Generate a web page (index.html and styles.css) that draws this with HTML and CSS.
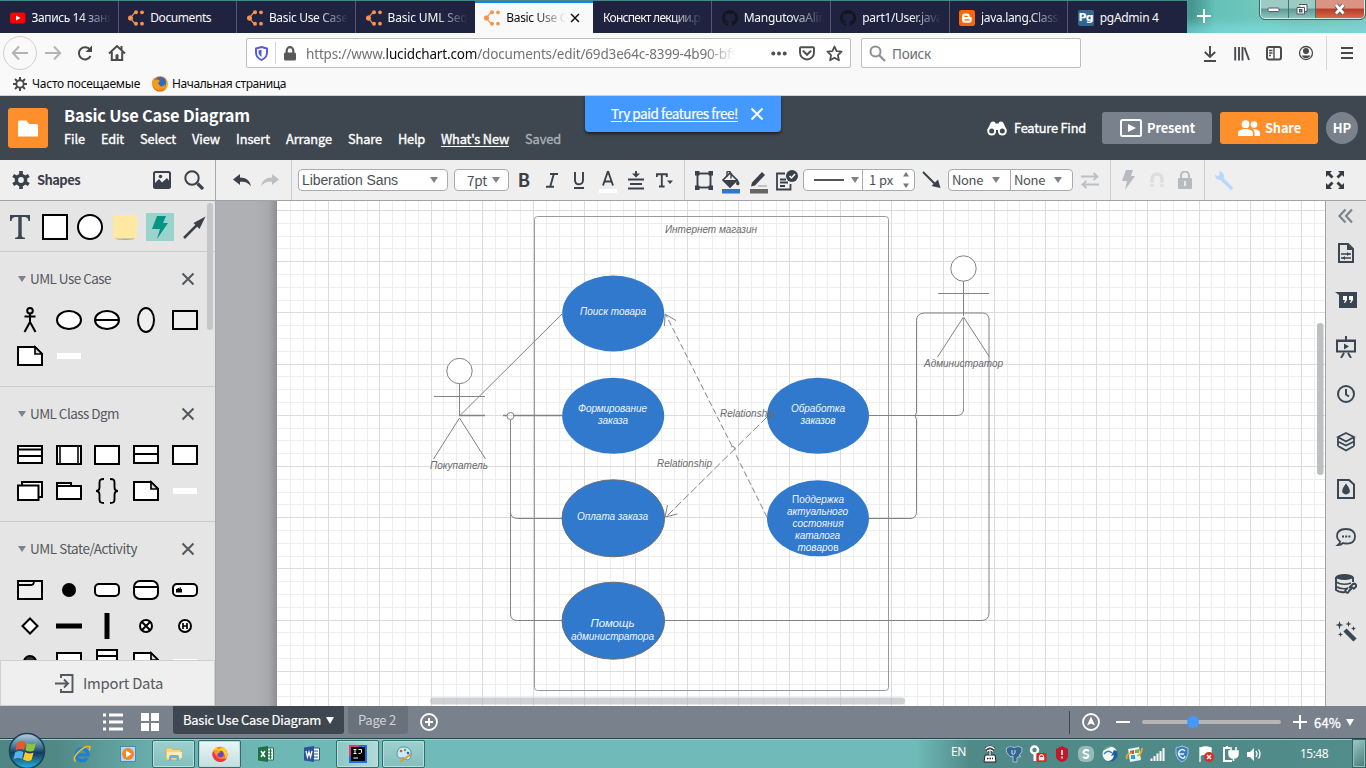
FILE: index.html
```html
<!DOCTYPE html>
<html lang="en">
<head>
<meta charset="utf-8">
<title>Basic Use Case Diagram: Lucidchart</title>
<link rel="stylesheet" href="styles.css">
</head>
<body>
<svg class="defs" width="0" height="0">
  <defs>
    <symbol id="lucid" viewBox="0 0 16 16"><g fill="#f7934e"><path d="M7.600 2.600 4.500 6.200a2.400 2.400 0 1 0 0 3.600l3.100 3.600-1.200.6L3 9.800V6.200L6.400 2z"/><circle cx="2.500" cy="8" r="2.500"/><circle cx="8" cy="2.300" r="2"/><circle cx="8" cy="13.700" r="2"/><circle cx="14" cy="2.300" r="1.900"/><circle cx="14" cy="13.700" r="1.900"/></g></symbol>
    <symbol id="github" viewBox="0 0 16 16"><path fill="#14161d" d="M8 0C3.580 0 0 3.580 0 8c0 3.540 2.290 6.530 5.470 7.590.4.070.55-.17.55-.38v-1.490c-2.010.37-2.530-.49-2.690-.94-.09-.23-.48-.94-.82-1.130-.28-.15-.68-.52-.01-.53.63-.01 1.080.58 1.230.82.72 1.210 1.870.87 2.330.66.07-.52.28-.87.51-1.070-1.780-.2-3.640-.89-3.640-3.950 0-.87.31-1.590.82-2.150-.08-.2-.36-1.020.08-2.120 0 0 .67-.21 2.200.82a7.600 7.600 0 0 1 4 0c1.530-1.040 2.200-.82 2.200-.82.44 1.100.16 1.920.08 2.120.51.56.82 1.270.82 2.150 0 3.070-1.870 3.750-3.650 3.950.29.25.54.73.54 1.480v2.200c0 .21.15.46.55.38A8 8 0 0 0 8 0z"/></symbol>
    <symbol id="x" viewBox="0 0 14 14"><path d="M1.500 1.500l11 11M12.500 1.500l-11 11" stroke="currentColor" stroke-width="2" fill="none"/></symbol>
    <symbol id="note" viewBox="0 0 26 26"><path d="M1 4h17l7 7v11H1z" fill="#fff" stroke="#000" stroke-width="2"/><path d="M18 4v7h7z" fill="#ddd" stroke="#000" stroke-width="1.700"/></symbol>
    <symbol id="rect" viewBox="0 0 26 26"><path d="M1 4h24v18H1z" fill="#fff" stroke="#000" stroke-width="2"/></symbol>
    <symbol id="blank" viewBox="0 0 26 26"><path d="M1 10h24v6H1z" fill="#fff"/></symbol>
    <symbol id="ff" viewBox="0 0 20 20"><circle cx="10" cy="10.500" r="8.500" fill="#ff7a1a"/><path d="M3 5l3-3 2 3 5-3c6 3 7 12 1 16 3-4 2-8-1-9z" fill="#ffcb2e"/><path d="M2 7c-2 6 3 12 8 12 4 0 7-2 8-5-3 3-12 3-14-5z" fill="#f0305a"/><circle cx="10.500" cy="10" r="3.600" fill="#6b3fd0"/><path d="M4 6c3-1 5 0 7 2-3 0-3 1-4 3-2 0-4-2-3-5z" fill="#ff9a1f"/></symbol>
    <linearGradient id="orb" x1="0" y1="0" x2="0" y2="1"><stop offset="0" stop-color="#b7d3df"/><stop offset=".4" stop-color="#3f7192"/><stop offset=".55" stop-color="#123a5e"/><stop offset="1" stop-color="#29b4dc"/></linearGradient>
  </defs>
</svg>

<div class="tabs">
  <div class="tab"><svg class="fav" viewBox="0 0 16 16"><rect y="2.500" width="15.500" height="11" rx="2.500" fill="#f00"/><path d="M6 5.500v5l4.500-2.500z" fill="#fff"/></svg><span class="lbl fade"><span data-w="82">Запись 14 заня</span></span></div>
  <div class="tab"><svg class="fav"><use href="#lucid"/></svg><span class="lbl"><span data-w="61">Documents</span></span></div>
  <div class="tab"><svg class="fav"><use href="#lucid"/></svg><span class="lbl fade"><span data-w="79">Basic Use Case</span></span></div>
  <div class="tab"><svg class="fav"><use href="#lucid"/></svg><span class="lbl fade"><span data-w="80">Basic UML Seq</span></span></div>
  <div class="tab active"><svg class="fav"><use href="#lucid"/></svg><span class="lbl fade short"><span data-w="79">Basic Use Case</span></span><svg class="tabx"><use href="#x"/></svg></div>
  <div class="tab first"><span class="lbl fade wide"><span data-w="104">Конспект лекции.pd</span></span></div>
  <div class="tab"><svg class="fav"><use href="#github"/></svg><span class="lbl fade"><span data-w="82">MangutovaAlin</span></span></div>
  <div class="tab"><svg class="fav"><use href="#github"/></svg><span class="lbl fade"><span data-w="80">part1/User.java</span></span></div>
  <div class="tab"><svg class="fav" viewBox="0 0 16 16"><rect width="16" height="16" rx="2.500" fill="#ff6600"/><path d="M5.500 3.500h3a2.200 2.200 0 0 1 2.200 2.300c0 1 .3 1.200 1 1.200.8 0 1 .3 1 1v2a2.700 2.700 0 0 1-2.700 2.700H5.700A2.700 2.700 0 0 1 3 10V6.200a2.600 2.600 0 0 1 2.500-2.700z" fill="#fff"/><path d="M6 6.400h2.200M6 9.900h4" stroke="#ff6600" stroke-width="1.400" stroke-linecap="round"/></svg><span class="lbl fade"><span data-w="77">java.lang.Class</span></span></div>
  <div class="tab"><span class="fav pg">Pg</span><span class="lbl"><span data-w="59">pgAdmin 4</span></span></div>
  <div class="glass">
    <svg class="plus" viewBox="0 0 14 14"><path d="M7 0v14M0 7h14" stroke="#fff" stroke-width="2"/></svg>
    <div class="winbtns">
      <span class="wb"><svg width="14" height="8"><rect x="1" y="3" width="11" height="3.500" rx="1" fill="#fff" stroke="#555b66"/></svg></span><span class="wb"><svg width="14" height="13"><path d="M4 1.500h8v7h-2M2 4.500h7.500v6.500H2z" fill="#fff" stroke="#4c5660"/><rect x="4.500" y="6.500" width="2.500" height="2.500" fill="#5d8b87" stroke="#4c5660"/></svg></span><span class="wb close"><svg width="14" height="13" viewBox="0 0 14 13"><path d="M3 2l7.500 8.500M10.500 2L3 10.500" stroke="#555" stroke-width="4.500"/><path d="M3 2l7.500 8.500M10.500 2L3 10.500" stroke="#fff" stroke-width="2.800"/></svg></span>
    </div>
  </div>
</div>

<div class="nav">
  <span class="back"><svg width="18" height="16" viewBox="0 0 18 16"><path d="M17 8H2M8 1.500L1.800 8 8 14.500" fill="none" stroke="#b4b4b5" stroke-width="2"/></svg></span>
  <svg class="n-fwd" width="18" height="16" viewBox="0 0 18 16"><path d="M1 8h15M10 1.500L16.200 8 10 14.500" fill="none" stroke="#b4b4b5" stroke-width="2"/></svg>
  <svg class="n-reload" width="16" height="16" viewBox="0 0 16 16"><path d="M13 4.700A6.100 6.100 0 1 0 13.500 11" fill="none" stroke="#4a4a4c" stroke-width="2"/><path d="M15 .500v6.500H8.500z" fill="#4a4a4c"/></svg>
  <svg class="n-home" width="18" height="18" viewBox="0 0 18 18"><path d="M1 9.500L9 2l8 7.500M3.800 8v8h10.400V8M13.500 2v4" fill="none" stroke="#4a4a4c" stroke-width="2"/><path d="M7.500 16v-4.500a1.500 1.500 0 0 1 3 0V16z" fill="#4a4a4c"/></svg>
  <div class="url">
    <svg class="u-shield" width="13" height="15" viewBox="0 0 13 15"><path d="M6.500 1L12 2.500v4c0 3.500-2 6-5.500 7.500C3 12.500 1 10 1 6.500v-4z" fill="none" stroke="#5a52e0" stroke-width="1.900"/><path d="M6.500 3.800v7c-1.800-1-3-2.800-3-4.800V4.500z" fill="#3f63d8"/></svg>
    <i class="u-div"></i>
    <svg class="u-lock" width="12" height="15" viewBox="0 0 12 15"><rect y="6.500" width="12" height="8" rx="1.500" fill="#59595b"/><path d="M2.700 7V4.500a3.300 3.300 0 0 1 6.600 0V7" fill="none" stroke="#59595b" stroke-width="2.200"/></svg>
    <span class="u-text"><span data-w="433">https://www.<b>lucidchart.com</b>/documents/edit/69d3e64c-8399-4b90-bf9</span></span>
    <svg class="u-dots" width="16" height="5"><g fill="#4f4f51"><circle cx="2.300" cy="2.500" r="2"/><circle cx="8" cy="2.500" r="2"/><circle cx="13.700" cy="2.500" r="2"/></g></svg>
    <svg class="u-pocket" width="16" height="15" viewBox="0 0 16 15"><path d="M2 1.200h12a1 1 0 0 1 1 1V6.500a7 7 0 0 1-14 0V2.200a1 1 0 0 1 1-1z" fill="none" stroke="#4f4f51" stroke-width="1.900"/><path d="M4.500 5.300L8 8.700l3.500-3.400" fill="none" stroke="#4f4f51" stroke-width="2.100" stroke-linecap="round"/></svg>
    <svg class="u-star" width="17" height="17" viewBox="0 0 17 17"><path d="M8.500 1.500l2.100 4.700 5 .5-3.700 3.500 1 5.100-4.400-2.600-4.400 2.600 1-5.100L1.400 6.700l5-.5z" fill="none" stroke="#4f4f51" stroke-width="1.800" stroke-linejoin="round"/></svg>
  </div>
  <div class="search"><svg width="17" height="17" viewBox="0 0 17 17"><circle cx="6.500" cy="6.500" r="5" fill="none" stroke="#8e8e90" stroke-width="2"/><path d="M10 10l6 6" stroke="#8e8e90" stroke-width="2.200"/></svg><span data-w="39">Поиск</span></div>
  <div class="navr">
    <svg width="14" height="17" viewBox="0 0 14 17"><path d="M7 1v11M1.800 7L7 12l5.200-5M1 16h12" fill="none" stroke="#4a4a4c" stroke-width="1.900"/></svg>
    <svg width="16" height="15" viewBox="0 0 16 15"><path d="M1.200 1v13.500M5 1v13.500M8.500 1v13.500M10.500 1.500l4.500 12.500" fill="none" stroke="#4a4a4c" stroke-width="1.900"/></svg>
    <svg width="16" height="15" viewBox="0 0 16 15"><rect x="1" y="1" width="14" height="12.500" rx="2" fill="none" stroke="#4a4a4c" stroke-width="2"/><path d="M8 1v13M3 4.500h3.500M3 7h3.500M3 9.500h2" stroke="#4a4a4c" stroke-width="1.400"/></svg>
    <svg width="16" height="16" viewBox="0 0 16 16"><circle cx="8" cy="8" r="6.500" fill="none" stroke="#4a4a4c" stroke-width="1.300"/><circle cx="8" cy="6" r="3" fill="#4a4a4c"/><path d="M3.500 10.500h9a5.200 5.200 0 0 1-9 0z" fill="#4a4a4c"/></svg>
    <i class="n-div"></i>
    <svg width="12" height="12" viewBox="0 0 12 12"><path d="M0 1h12M0 6h12M0 11h12" stroke="#4a4a4c" stroke-width="2"/></svg>
  </div>
</div>

<div class="bookmarks">
  <svg width="14" height="14" viewBox="0 0 14 14"><g stroke="#4a4a4c" stroke-width="2"><path d="M7 0v14M0 7h14M2 2l10 10M12 2L2 12"/></g><circle cx="7" cy="7" r="3.700" fill="#f9f9fa" stroke="#4a4a4c" stroke-width="1.900"/></svg>
  <span class="bm1" data-w="108">Часто посещаемые</span>
  <svg class="bm-ff" width="16" height="16" viewBox="0 0 16 16"><circle cx="8" cy="8" r="7.800" fill="#e66a14"/><circle cx="8.500" cy="6.500" r="5.500" fill="#2d6cc0"/><path d="M0 5l2-3 1 2c2-1 4 0 5 1L6 7l2 3c2 1 4 0 5-2 1 4-3 7-7 6S0 9 0 5z" fill="#f59a1c"/><path d="M14 3c3 4 2 9-3 12 3-3 4-7 3-12z" fill="#f7c52a"/></svg>
  <span class="bm2" data-w="114">Начальная страница</span>
</div>

<header class="head">
  <div class="logo"><svg width="20" height="17" viewBox="0 0 20 17"><path d="M0 2.200A1.500 1.500 0 0 1 1.500.500h7L11 4h7.500A1.500 1.500 0 0 1 20 5.500v11H0z" fill="#fff"/></svg></div>
  <div class="titles">
    <div class="title"><span data-w="186">Basic Use Case Diagram</span></div>
    <div class="menu"><span data-w="21">File</span><span data-w="23">Edit</span><span data-w="36">Select</span><span data-w="28">View</span><span data-w="34">Insert</span><span data-w="46">Arrange</span><span data-w="34">Share</span><span data-w="27">Help</span><span data-w="68" class="new">What's New</span><span data-w="36" class="saved">Saved</span></div>
  </div>
  <div class="banner"><a data-w="127">Try paid features free!</a><svg width="14" height="14"><use href="#x"/></svg></div>
  <div class="find"><svg width="20" height="15" viewBox="0 0 20 15"><path d="M3.500 2Q4 .500 6 .500q2.500 0 2.500 2h3q0-2 2.500-2 2 0 2.500 1.500l3 7h-19z" fill="#fff"/><circle cx="4.700" cy="10" r="4.500" fill="#fff"/><circle cx="15.300" cy="10" r="4.500" fill="#fff"/><circle cx="4.700" cy="10" r="2.500" fill="#3e4650"/><circle cx="15.300" cy="10" r="2.500" fill="#3e4650"/><path d="M10 9v6" stroke="#3e4650" stroke-width="2"/></svg><span data-w="72">Feature Find</span></div>
  <div class="btn present"><svg width="22" height="18" viewBox="0 0 22 18"><rect x="1" y="1" width="20" height="16" rx="1.500" fill="none" stroke="#fff" stroke-width="2"/><path d="M8 5v8l8-4z" fill="#fff"/></svg><span data-w="48">Present</span></div>
  <div class="btn share"><svg width="22" height="17" viewBox="0 0 22 17"><g fill="#fff"><circle cx="7.500" cy="4.200" r="3.900"/><circle cx="16" cy="4.500" r="3.300"/><path d="M0 16v-2.500c0-3 3-4.500 7.500-4.500S15 10.500 15 13.500V16zM16.500 16v-2.500c0-2-.7-3.300-2-4.300 4.500-.4 7.500 1.300 7.500 4V16z"/></g></svg><span data-w="36">Share</span></div>
  <div class="avatar">HP</div>
</header>

<div class="mid">
  <aside class="left">
    <div class="lhead"><svg width="18" height="18" viewBox="0 0 18 18"><g stroke="#3a414a" stroke-width="3.600"><path d="M9 0v18M1.200 4.500l15.600 9M1.200 13.500l15.600-9"/></g><circle cx="9" cy="9" r="4.600" fill="#efefef" stroke="#3a414a" stroke-width="3.400"/></svg><span class="lt" data-w="43">Shapes</span>
      <svg class="pic" width="18" height="18" viewBox="0 0 18 18"><rect x="1" y="1" width="16" height="16" rx="1.500" fill="none" stroke="#3a414a" stroke-width="2"/><circle cx="7.500" cy="5.500" r="1.800" fill="#3a414a"/><path d="M2 16v-4l4-4 3 3.500L14 7l3 4v5z" fill="#3a414a"/></svg>
      <svg width="20" height="20" viewBox="0 0 20 20"><circle cx="8" cy="8" r="6.700" fill="none" stroke="#3a414a" stroke-width="2"/><path d="M13.500 13.500l5.500 5.500" stroke="#3a414a" stroke-width="3.200"/></svg></div>
    <div class="lbody">
      <div class="basic">
        <svg width="20" height="26" viewBox="0 0 20 26"><path d="M0 1h20v6h-1.500C18 4 17 3 14.500 3h-2.800v18c0 2 1 2.500 3.300 2.700V25H5v-1.300c2.300-.2 3.300-.7 3.300-2.700V3H5.500C3 3 2 4 1.500 7H0z" fill="#3a4652"/></svg>
        <svg class="b2" width="26" height="26"><rect x="1" y="1" width="24" height="24" fill="#fff" stroke="#000" stroke-width="2"/></svg>
        <svg class="b3" width="26" height="26"><circle cx="13" cy="13" r="12" fill="#fff" stroke="#000" stroke-width="2"/></svg>
        <svg class="b4" width="24" height="26"><ellipse cx="12" cy="24.300" rx="10" ry="1.700" fill="#aaa"/><path d="M0 1h24v23.500H0z" fill="#ffe8a1"/></svg>
        <svg class="b5" width="28" height="28"><path d="M0 0h28v28H0z" fill="#99d3cb"/><path d="M11 3h9l-3 7h5L11 26l3-10H6z" fill="#059484"/></svg>
        <svg class="b6" width="24" height="25"><path d="M1 23L16 8" stroke="#3a414a" stroke-width="2.500"/><path d="M22.500 1.500L10.500 8l6 6z" fill="#3a414a"/></svg>
      </div>
      <section class="sec"><h3><i></i><span data-w="81">UML Use Case</span><svg class="sx"><use href="#x"/></svg></h3>
        <div class="shapes">
          <svg viewBox="0 0 26 26"><g fill="none" stroke="#000" stroke-width="2"><circle cx="13" cy="3.800" r="2.800"/><path d="M13 7v9M7.500 9.500h11M13 15l-5.500 10M13 15l5.500 10"/></g></svg>
          <svg viewBox="0 0 26 26"><ellipse cx="13" cy="13" rx="12" ry="9" fill="#fff" stroke="#000" stroke-width="2"/></svg>
          <svg viewBox="0 0 26 26"><ellipse cx="13" cy="13" rx="12" ry="9" fill="#fff" stroke="#000" stroke-width="2"/><path d="M1 13h24" stroke="#000" stroke-width="2"/></svg>
          <svg viewBox="0 0 26 26"><ellipse cx="13" cy="13" rx="8" ry="12" fill="#eee" stroke="#000" stroke-width="2"/></svg>
          <svg viewBox="0 0 26 26"><path d="M1 4h24v18H1z" fill="#eee" stroke="#000" stroke-width="2"/></svg>
          <svg><use href="#note"/></svg><svg><use href="#blank"/></svg>
        </div></section>
      <section class="sec"><h3><i></i><span data-w="89">UML Class Dgm</span><svg class="sx"><use href="#x"/></svg></h3>
        <div class="shapes">
          <svg viewBox="0 0 26 26"><path d="M1 4h24v17H1zM1 7.500h24M1 14h24" fill="#fff" stroke="#000" stroke-width="2"/></svg>
          <svg viewBox="0 0 26 26"><path d="M1 4h24v18H1z" fill="#fff" stroke="#000" stroke-width="2"/><path d="M4 4v18M22 4v18" stroke="#222" stroke-width="1.800"/></svg>
          <svg><use href="#rect"/></svg>
          <svg viewBox="0 0 26 26"><path d="M1 4h24v17H1zM1 12h24" fill="#fff" stroke="#000" stroke-width="2"/></svg>
          <svg><use href="#rect"/></svg>
          <svg viewBox="0 0 26 26"><path d="M5 4h20v15H5z" fill="#fff" stroke="#000" stroke-width="2"/><path d="M1 7.500h20.500V22H1z" fill="#fff" stroke="#000" stroke-width="2"/></svg>
          <svg viewBox="0 0 26 26"><path d="M1 8V5h14v3M1 8h24v13H1z" fill="#fff" stroke="#000" stroke-width="2"/></svg>
          <svg viewBox="0 0 26 26"><path d="M10 1C6 1 5.500 2 5.500 5v4c0 3-1 4-3.500 4 2.500 0 3.500 1 3.500 4v4c0 3 .5 4 4.500 4M16 1c4 0 4.500 1 4.500 4v4c0 3 1 4 3.500 4-2.500 0-3.500 1-3.500 4v4c0 3-.5 4-4.500 4" fill="none" stroke="#000" stroke-width="1.900"/></svg>
          <svg><use href="#note"/></svg><svg><use href="#blank"/></svg>
        </div></section>
      <section class="sec last"><h3><i></i><span data-w="107">UML State/Activity</span><svg class="sx"><use href="#x"/></svg></h3>
        <div class="shapes">
          <svg viewBox="0 0 26 26"><path d="M1 4h24v18H1z" fill="#eee" stroke="#000" stroke-width="2"/><path d="M1 8h13q3 0 3-4" fill="none" stroke="#000" stroke-width="1.800"/></svg>
          <svg viewBox="0 0 26 26"><circle cx="13" cy="13" r="7"/></svg>
          <svg viewBox="0 0 26 26"><rect x="1" y="7" width="24" height="12" rx="4" fill="#fff" stroke="#000" stroke-width="2"/></svg>
          <svg viewBox="0 0 26 26"><rect x="1" y="4" width="24" height="18" rx="6" fill="#fff" stroke="#000" stroke-width="2"/><path d="M1 10h24" stroke="#000" stroke-width="2"/></svg>
          <svg viewBox="0 0 26 26"><rect x="1" y="7" width="24" height="12" rx="4" fill="#fff" stroke="#000" stroke-width="2"/><path d="M4 12h1.500v-1h1.500v1h.5v-1.500h1.500V12h1v3.500H4z"/></svg>
          <svg viewBox="0 0 26 26"><path d="M13 5.500l7.500 7.500-7.500 7.500L5.500 13z" fill="#fff" stroke="#000" stroke-width="2"/></svg>
          <svg viewBox="0 0 26 26"><path d="M0 10.500h26v5H0z"/></svg>
          <svg viewBox="0 0 26 26"><path d="M10.500 0h5v26h-5z"/></svg>
          <svg viewBox="0 0 26 26"><circle cx="13" cy="13" r="6" fill="#fff" stroke="#000" stroke-width="2"/><path d="M9 9l8 8M17 9l-8 8" stroke="#000" stroke-width="2"/></svg>
          <svg viewBox="0 0 26 26"><circle cx="13" cy="13" r="6" fill="#fff" stroke="#000" stroke-width="2"/><path d="M11 10v6M15 10v6M11 13h4" stroke="#000" stroke-width="1.700"/></svg>
          <svg viewBox="0 0 26 26"><circle cx="13" cy="13" r="6" fill="#333" stroke="#000" stroke-width="2"/></svg>
          <svg><use href="#rect"/></svg>
          <svg viewBox="0 0 26 26"><path d="M3 1h20v24H3zM3 7h20" fill="#fff" stroke="#000" stroke-width="2"/></svg>
          <svg><use href="#note"/></svg><svg><use href="#blank"/></svg>
        </div></section>
      <i class="lscroll"></i>
    </div>
    <div class="import"><svg width="19" height="19" viewBox="0 0 19 19"><path d="M6 4V1h11.500v17H6v-3M0 9.500h12M9 5.500l4 4-4 4" fill="none" stroke="#55585c" stroke-width="1.900"/></svg><span data-w="80">Import Data</span></div>
  </aside>

  <div class="work">
    <div class="tools">
      <svg class="t1" width="18" height="13" viewBox="0 0 18 13"><path d="M0 5.500L7 0v3.500c6 0 10 3 11 9-3-4-6-5-11-4.700V11z" fill="#3a414a"/></svg>
      <svg class="t2" width="18" height="13" viewBox="0 0 18 13"><path d="M18 5.500L11 0v3.500C5 3.500 1 6.500 0 12.500 3 8.500 6 7.500 11 7.800V11z" fill="#bcbfc3"/></svg>
      <i class="sep"></i>
      <div class="sel font"><span data-w="96">Liberation Sans</span><i class="tri"></i></div><b></b>
      <div class="sel size"><span data-w="20">7pt</span><i class="tri"></i></div>
      <strong class="tb">B</strong>
      <svg width="12" height="15" viewBox="0 0 12 15"><path d="M4 1h8M0 13.700h8M7.800 1L4.200 13.700" fill="none" stroke="#3a414a" stroke-width="1.900"/></svg>
      <svg width="12" height="17" viewBox="0 0 12 17"><path d="M2 0v8q0 4.300 4 4.300T10 8V0" fill="none" stroke="#3a414a" stroke-width="1.900"/><path d="M1 16h10" stroke="#3a414a" stroke-width="2"/></svg>
      <svg class="low" width="18" height="22" viewBox="0 0 18 22"><path d="M4 14.500L8.700 1h.6L14 14.500M5.500 10.500h7" fill="none" stroke="#3a414a" stroke-width="1.900"/><path d="M0 18h18v4H0z" fill="#fff"/></svg>
      <svg width="16" height="19" viewBox="0 0 16 19"><path d="M8 0v5M0 8.500h16M2 13h12M0 17.500h16" stroke="#3a414a" stroke-width="1.900"/><path d="M4 2.500h8L8 6.500z" fill="#3a414a"/></svg>
      <svg width="17" height="15" viewBox="0 0 17 15"><path d="M.8 4V1.200h10V4M5.800 1v12M3 13.500h5.600" fill="none" stroke="#3a414a" stroke-width="1.900"/><path d="M11 7.500h6l-3 3.500z" fill="#3a414a"/></svg>
      <i class="sep"></i>
      <svg width="18" height="19" viewBox="0 0 18 19"><rect x="2.500" y="2.500" width="13" height="14" fill="none" stroke="#3a414a" stroke-width="1.900"/><path d="M0 0h4.500v4.500H0zM13.500 0H18v4.500h-4.500zM0 14.500h4.500V19H0zM13.500 14.500H18V19h-4.500z" fill="#3a414a"/></svg>
      <svg class="low" width="18" height="23" viewBox="0 0 18 23"><path d="M1 9L8 2l7 7-7 7z" fill="#efefef" stroke="#3a414a" stroke-width="1.700"/><path d="M1 9h14l-7 7zM15 8q3.500 4 2 6-2 1-3-1z" fill="#3a414a"/><path d="M5 5.500V1q3-2 4 2v4.500" fill="none" stroke="#3a414a" stroke-width="1.400"/><path d="M0 18h18v4.500H0z" fill="#2f77ce"/></svg>
      <svg class="low" width="18" height="23" viewBox="0 0 18 23"><path d="M1 15.500l1-4L12 1l3 3L5 14.500z" fill="#3a414a"/><path d="M8 15h9" stroke="#aaa" stroke-width="1.300"/><path d="M0 18h18v4.500H0z" fill="#666"/></svg>
      <svg width="22" height="21" viewBox="0 0 22 21"><path d="M9 3.500H1v16h13.500V14M4 9.500h6M4 12.500h8M4 16h5" fill="none" stroke="#3a414a" stroke-width="1.800"/><circle cx="16" cy="6" r="6" fill="#3a414a"/><path d="M13.500 6l2 2 3.500-4" fill="none" stroke="#fff" stroke-width="1.500"/></svg><b></b>
      <div class="sel line"><svg width="30" height="4"><path d="M0 2h30" stroke="#555" stroke-width="2"/></svg><i class="tri"></i><i class="vd"></i><span data-w="24">1 px</span><svg width="6" height="16"><path d="M3 0l3 4.500H0zM3 16l3-4.500H0z" fill="#777"/></svg></div>
      <svg width="19" height="18" viewBox="0 0 19 18"><path d="M1 1l12 12" stroke="#3a414a" stroke-width="1.900"/><path d="M18.500 17L16 8.500 9.500 15z" fill="#3a414a"/></svg>
      <div class="sel ends"><span data-w="31">None</span><i class="tri"></i><i class="vd"></i><span data-w="31">None</span><i class="tri"></i></div>
      <svg width="18" height="17" viewBox="0 0 18 17"><path d="M0 4.500h15M18 12.500H3M12.500 1l4 3.500-4 3.500M5.500 9l-4 3.500 4 3.500" fill="none" stroke="#bcbfc3" stroke-width="1.800"/></svg>
      <i class="sep"></i>
      <svg width="13" height="20" viewBox="0 0 13 20"><path d="M4 0h7L9 6h4L3 20l2-9H0z" fill="#b7babe"/></svg>
      <svg width="14" height="16" viewBox="0 0 14 16"><path d="M2 15V7a5 5 0 0 1 10 0v8" fill="none" stroke="#dcdee0" stroke-width="3.500"/><path d="M0 11.500h14" stroke="#efefef" stroke-width="1.300"/></svg>
      <svg width="14" height="18" viewBox="0 0 14 18"><rect y="7" width="14" height="11" rx="1" fill="#b7babe"/><path d="M3 8V4.500a4 4 0 0 1 8 0V8" fill="none" stroke="#b7babe" stroke-width="2"/><path d="M7 10v5" stroke="#efefef" stroke-width="1.800"/></svg>
      <i class="sep"></i>
      <svg width="18" height="19" viewBox="0 0 18 19"><path d="M6.500 7.500l9.500 9.500" stroke="#b9d7fa" stroke-width="3.600" stroke-linecap="round"/><path d="M4.500 0v4L3 5.200 0 3.500Q0 9 6 9.200L9 6.500Q9.500 1.500 4.500 0z" fill="#b9d7fa"/></svg>
      <b></b>
      <svg width="18" height="18" viewBox="0 0 18 18"><g fill="#333b44"><path d="M0 0h6L4 2l3.500 3.500-2 2L2 4 0 6zM18 0v6l-2-2-3.500 3.500-2-2L14 2l-2-2zM0 18v-6l2 2 3.500-3.500 2 2L4 16l2 2zM18 18h-6l2-2-3.500-3.500 2-2L16 14l2-2z"/></g></svg>
    </div>
    <div class="stage">
      <svg class="canvas" viewBox="216 201 1109 505" width="1109" height="505">
        <defs><linearGradient id="sh"><stop offset="0" stop-color="#aeb0b3"/><stop offset=".6" stop-color="#a6a8ab"/><stop offset="1" stop-color="#8d8f93"/></linearGradient></defs>
        <rect x="216" y="201" width="1109" height="505" fill="#aeb0b3"/>
        <rect x="256" y="201" width="21" height="505" fill="url(#sh)"/>
        <rect x="277" y="201" width="1048" height="505" fill="#fff"/>
        <path id="minor" class="minor"/><path id="major" class="major"/>
        <rect class="ln soft" x="534.500" y="216.500" width="354" height="474" rx="3"/>
        <g class="ln">
          <circle cx="459.500" cy="371" r="12.700" fill="#fff"/><path d="M459.500 384v32M434 396.500h51M459.500 418l-26 41M459.500 418l26 41"/>
          <circle cx="963.500" cy="268.500" r="12.700" fill="#fff"/><path d="M963.500 281v35M938 293.500h51M963.500 317l-26 40M963.500 317l26 40"/>
          <path d="M459.500 416L562 314"/>
          <path d="M459.500 415.500h25.500M503 415.500h4M513.500 415.500h49" stroke-width="1.300"/>
          <circle cx="510.500" cy="416" r="3.500"/>
          <path d="M510.500 420v194q0 6.500 7 6.500h45M510.500 512q0 6 7 6.500h45"/>
          <path d="M869 415.500h88q6.500 0 6.500-6.500" /><path class="soft" d="M963.500 409V317"/>
          <path d="M869 518.500h41q6.500 0 6.500-7v-92q-3-3.500 0-7v-92q0-7 8-7.500h58q6.500 0 6.500 7v293q0 7-7 7.500H664"/>
          <path d="M767 517L735 453M732 446L666 315" stroke-dasharray="6 3"/><path d="M767 417L666 517" stroke-dasharray="8 3"/>
          <path d="M664.500 326l.5-12 11 6.500M667.500 505l-2.500 12 12.500-3M731 447q4-2 4 3.500"/>
        </g>
        <g class="cases">
          <ellipse cx="613.200" cy="313.500" rx="51" ry="38"/><ellipse cx="613.200" cy="415.800" rx="51" ry="38"/><ellipse cx="613.300" cy="518.300" rx="51.300" ry="38.500" stroke="#6b6d72"/><ellipse cx="613.300" cy="620.700" rx="51.300" ry="38.500" stroke="#6b6d72"/><ellipse cx="818" cy="415.800" rx="51" ry="38"/><ellipse cx="818" cy="518.300" rx="51" ry="38"/>
        </g>
        <g class="txt">
          <text x="711" y="233" textLength="92">Интернет магазин</text>
          <text x="459" y="469" textLength="58">Покупатель</text>
          <text x="963.500" y="367" textLength="79">Администратор</text>
          <text x="684.500" y="467" textLength="55">Relationship</text>
          <text x="747.500" y="417" textLength="55">Relationship</text>
        </g>
        <g class="txt w">
          <text x="613" y="315" textLength="66">Поиск товара</text>
          <text x="612.500" y="412" textLength="69">Формирование</text><text x="613" y="424" textLength="30">заказа</text>
          <text x="612.500" y="520" textLength="71">Оплата заказа</text>
          <text x="612.500" y="627" textLength="44" class="big">Помощь</text><text x="612.500" y="640" textLength="83">администратора</text>
          <text x="818" y="412" textLength="54">Обработка</text><text x="818" y="424" textLength="35">заказов</text>
          <text x="818" y="503" textLength="52"><tspan class="up">По</tspan>ддержка</text><text x="817.500" y="515" textLength="61">актуального</text><text x="818" y="527" textLength="51">состояния</text><text x="817.500" y="539" textLength="45">каталога</text><text x="818" y="551" textLength="41">товар<tspan class="up">ов</tspan></text>
        </g>
        <rect x="430" y="697.500" width="475" height="7" rx="3.500" fill="#b6b8ba" opacity=".65"/>
        <rect x="1317" y="323" width="6.500" height="152" rx="3.200" fill="#b6b8ba" opacity=".9"/>
      </svg>
      <aside class="dock">
        <svg viewBox="0 0 22 22"><path d="M10.500 4.500L4.500 11l6 6.500M17 4.500L11 11l6 6.500" fill="none" stroke="#7b848d" stroke-width="2.200"/></svg>
        <svg viewBox="0 0 22 22"><path d="M4 2h9l5 5v13H4z" fill="none" stroke="#3a4652" stroke-width="2"/><path d="M12 2v6h6" fill="#3a4652"/><path d="M6 12h10M6 16h10" stroke="#3a4652" stroke-width="1.400"/><path d="M12 10l3 2-3 2zM10 14l-3 2 3 2z" fill="#3a4652"/></svg>
        <svg viewBox="0 0 22 22"><path d="M0 3h22v16H4V6z" fill="#3a4652"/><path d="M8 7h4v4l-2 3H9l1-3H8zM14 7h4v4l-2 3h-1l1-3h-2z" fill="#fff"/></svg>
        <svg viewBox="0 0 22 22"><path d="M2 5h18v10.500H2zM9 17l-3 5M13 17l3 5M11 0v4" fill="none" stroke="#3a4652" stroke-width="2"/><path d="M1 3.500h20V6H1zM9 7.500v6l5-3z" fill="#3a4652"/></svg>
        <svg viewBox="0 0 22 22"><circle cx="11" cy="11" r="8" fill="none" stroke="#3a4652" stroke-width="2"/><path d="M11 6v5.500l3 2" fill="none" stroke="#3a4652" stroke-width="2"/></svg>
        <svg viewBox="0 0 22 22"><path d="M11 2l8 4-8 4.500L3 6zM3 10.500l8 4 8-4M3 15l8 4.500 8-4.500M3 7v8M19 7v8" fill="none" stroke="#3a4652" stroke-width="1.800"/></svg>
        <svg viewBox="0 0 22 22"><path d="M3 2h11l5 4.500V20H3z" fill="none" stroke="#3a4652" stroke-width="2"/><path d="M11 5.500q5 6.500 3.500 9-3.500 4-7 0Q6 12 11 5.500z" fill="#3a4652"/></svg>
        <svg viewBox="0 0 22 22"><path d="M3 19q2-1.500 2-3.500Q2 13 2 10.500q0-7.500 9-7.500t9 7.500-9 7q-2 0-3-.5-2 2-5 2z" fill="none" stroke="#3a4652" stroke-width="1.800"/><path d="M7 10.500h2M10.200 10.500h2M13.400 10.500h2" stroke="#3a4652" stroke-width="2"/></svg>
        <svg viewBox="0 0 22 22"><path d="M1 4v13q4 3 9 2M18 4v5" fill="none" stroke="#3a4652" stroke-width="1.900"/><ellipse cx="9.500" cy="4" rx="9" ry="3" fill="#3a4652"/><path d="M1 9q7 4 15 1M1 13.500q5 3 10 2" fill="none" stroke="#3a4652" stroke-width="1.500"/><path d="M14 15l4-4q2-1 3 1t-3 4M18 14l-4 4q-1 3-3 1t2-4" fill="none" stroke="#3a4652" stroke-width="2"/></svg>
        <svg viewBox="0 0 22 22"><path d="M10 10l10 10" stroke="#3a4652" stroke-width="4.500"/><path d="M4.500 1l1 3 3 1-3 1-1 3.500-1-3.500-3-1 3-1zM13.500 1l.8 2.200 2.200.8-2.200.8-.8 2.200-.8-2.200-2.200-.8 2.200-.8zM18.500 6l.7 1.800 1.800.7-1.800.7-.7 1.800-.7-1.800-1.800-.7 1.800-.7zM5.500 12l.7 1.800 1.800.7-1.800.7-.7 1.800-.7-1.800-1.800-.7 1.800-.7z" fill="#3a4652"/></svg>
      </aside>
    </div>
  </div>
</div>

<footer class="pages">
  <svg class="p-list" width="20" height="18"><path d="M0 2h3M0 9h3M0 16h3M6 2h14M6 9h14M6 16h14" stroke="#fff" stroke-width="3"/></svg>
  <svg class="p-grid" width="18" height="18"><path d="M0 0h8v8H0zM10 0h8v8h-8zM0 10h8v8H0zM10 10h8v8h-8z" fill="#fff"/></svg>
  <div class="ptab on"><span data-w="138">Basic Use Case Diagram</span><i class="tri"></i></div>
  <div class="ptab"><span data-w="38">Page 2</span></div>
  <svg class="p-add" width="18" height="18"><circle cx="9" cy="9" r="8" fill="none" stroke="#fff" stroke-width="1.800"/><path d="M9 5v8M5 9h8" stroke="#fff" stroke-width="2"/></svg>
  <i class="p-div"></i>
  <svg class="p-nav" width="18" height="18"><circle cx="9" cy="9" r="8" fill="none" stroke="#fff" stroke-width="1.800"/><path d="M9 3.500l4 9-4-2-4 2z" fill="#fff"/></svg>
  <svg class="p-minus" width="14" height="2"><path d="M0 1h14" stroke="#fff" stroke-width="2"/></svg>
  <div class="slider"><i></i></div>
  <svg class="p-plus" width="14" height="14"><path d="M7 0v14M0 7h14" stroke="#fff" stroke-width="2"/></svg>
  <span class="zoom" data-w="27">64%</span><i class="tri"></i>
</footer>

<div class="taskbar">
  <svg class="start" width="38" height="38" viewBox="0 0 38 38"><circle cx="19" cy="19" r="17.500" fill="url(#orb)" stroke="#1d4154" stroke-width="1.500"/><path d="M9 11q4-3 8.500-.5L16 18q-4-2-8.500.5z" fill="#e9572a"/><path d="M19 11q4 2.500 9 0l-2 7.500q-4 2-8.500-.3z" fill="#8bc53f"/><path d="M7 20.500q4-2.500 8.500-.5L14 27q-4-2-8.500.5z" fill="#55b3ee"/><path d="M17 20q4 2.500 8.500.5L23.500 28q-4 2-8.500-.5z" fill="#ffca2c"/></svg>
  <div class="app"><svg viewBox="0 0 18 18"><path d="M4.500 10H15a6 6 0 1 0-1 3" fill="none" stroke="#1f7fd0" stroke-width="3.200"/><path d="M2.500 16.500Q-1 13 6 6.500T17 2q0 1.500-1 3.500" fill="none" stroke="#f9b924" stroke-width="1.600"/></svg></div>
  <div class="app"><svg viewBox="0 0 18 18"><rect x="1.500" y="1.500" width="15" height="15" fill="#b5d9f4" stroke="#4889b9"/><circle cx="9" cy="9" r="6" fill="#f6861f"/><path d="M7 5.500v7l5.500-3.500z" fill="#fff"/></svg></div>
  <div class="app box"><svg viewBox="0 0 18 18"><path d="M1 3h5l1.500 1.500H16V15H1z" fill="#f3d77b" stroke="#d3aa45" stroke-width=".6"/><path d="M2 7h15v6H2z" fill="#f9edb5"/><path d="M4 16v-4q0-2 2-2h6q2 0 2 2v4h-2.500v-3h-5v3z" fill="#61b7e8"/></svg></div>
  <div class="app box lit"><svg><use href="#ff"/></svg></div>
  <div class="app"><svg viewBox="0 0 18 18"><path d="M9 3h7.500v12H9" fill="#fff" stroke="#207245"/><path d="M1 2.500L11 1v16L1 15.500z" fill="#207245"/><path d="M11 6h4M11 9h4M11 12h4M13.500 4v10" stroke="#207245"/><path d="M4 6l4 6M8 6l-4 6" stroke="#fff" stroke-width="1.500"/></svg></div>
  <div class="app"><svg viewBox="0 0 18 18"><path d="M9 3h7.500v12H9" fill="#fff" stroke="#2a5699"/><path d="M1 2.500L11 1v16L1 15.500z" fill="#2a5699"/><path d="M11 6h4M11 9h4M11 12h4" stroke="#2a5699"/><path d="M3 6l1.500 6L6 7l1.500 5L9 6" fill="none" stroke="#fff" stroke-width="1.300"/></svg></div>
  <div class="app box ij"><svg viewBox="0 0 18 18"><path d="M0 0h18v18H0z" fill="#1b6fe0"/><path d="M0 0h11L0 12z" fill="#e4387c"/><path d="M2 2h14v14H2z" fill="#000"/><path d="M4.500 4.500h3M6 4.500v4M4.500 8.500h3M9.500 4.500h3v3q0 1-3 1M4.500 13h4.500" fill="none" stroke="#fff"/></svg></div>
  <div class="app box lit2"><svg viewBox="0 0 18 18"><path d="M2 8Q3 1 10 2t6 8-6 4q-1-2-3-1-5 1-5-5z" fill="#cdeaf5" stroke="#5892ab"/><circle cx="6" cy="6" r="1.300" fill="#e44"/><circle cx="10" cy="5" r="1.300" fill="#4b4"/><circle cx="13" cy="8" r="1.300" fill="#26c"/><path d="M5 17L16 9" stroke="#e59b28" stroke-width="2"/></svg></div>
  <div class="tray">
    <span class="lang" data-w="15">EN</span>
    <svg viewBox="0 0 18 18"><path d="M4 10h10l1 7H3z" fill="#fff" stroke="#222"/><path d="M9 10V6M4.500 4q4.500-4.500 9 0M6 6.500q3-3 6 0" fill="none" stroke="#222" stroke-width="2.600"/><path d="M9 10V6M4.500 4q4.500-4.500 9 0M6 6.500q3-3 6 0" fill="none" stroke="#fff" stroke-width="1.300"/><path d="M6 13.500h6" stroke="#222" stroke-width="1.500" stroke-dasharray="1.500 1"/></svg>
    <svg viewBox="0 0 18 18"><path d="M1.500 3q4-3 7.500-.5 5-2.500 8 .5 1 4-3 7.500l2 1-4 1v4.500H8v-6l-2 1Q0 8 1.500 3z" fill="#336791" stroke="#cfe0ec" stroke-width=".7"/><path d="M7 5v4q2 1 3-1V5" fill="none" stroke="#cfe0ec"/></svg>
    <svg viewBox="0 0 18 18"><circle cx="5.500" cy="5" r="3.500" fill="none" stroke="#fff" stroke-width="2.500"/><path d="M6 8v8" stroke="#fff" stroke-width="3"/><rect x="7.500" y="8" width="10" height="9" rx="1" fill="#e02222"/><path d="M10.500 12v-1q2-2.500 4 0v1" fill="none" stroke="#fff" stroke-width="1.200"/><path d="M9.800 12h5.400v3.300H9.800z" fill="#fff"/></svg>
    <svg viewBox="0 0 18 18"><path d="M9 1l6 3v8q-1 4-6 5-5-1-6-5V4z" fill="#c1192b"/><path d="M9 5v5M9 11.500v2" stroke="#fff" stroke-width="1.600"/></svg>
    <svg viewBox="0 0 18 18"><rect x="1" y="1" width="16" height="16" rx="6" fill="#95bbb8"/><path d="M12 6Q9 4 7 6t2 3 2 3-5 0" fill="none" stroke="#fff" stroke-width="1.800"/></svg>
    <svg viewBox="0 0 18 18"><circle cx="9" cy="9" r="7.500" fill="#f2f8f4"/><path d="M2 6a7.500 7.500 0 0 1 9-4.500Q6 3 2 6z" fill="#5aa469"/><path d="M16 6a7.500 7.500 0 0 1-10 10q6 0 7-6l-3 1 3-6z" fill="#1f5f9c"/><path d="M3 9q4-5 8-1" fill="none" stroke="#3b83b3" stroke-width="1.500"/></svg>
    <svg viewBox="0 0 18 18"><path d="M3 4l11-2 2 13-11 2z" fill="#e7f5fc"/><path d="M5 6l4-1v4H5z" fill="#e34d28"/><path d="M10 5l4-1v4h-4z" fill="#70b83e"/><path d="M6 10h4v4H6z" fill="#349bdd"/><path d="M2 14Q0 9 7 8M12 11q5-2 5-8" fill="none" stroke="#f6a820" stroke-width="1.700"/></svg>
    <svg viewBox="0 0 18 18"><path d="M2.500 16v-2.500M5.500 16v-5M8.500 16V8.500M11.500 16V6M14.500 16V3" stroke="#fff" stroke-width="2"/></svg>
    <svg viewBox="0 0 18 18"><path d="M9 1l6 2v6q-1 6-6 8-5-2-6-8V3z" fill="#3d7cbc" stroke="#9ec8ee"/><path d="M12 6Q9 3 6.500 6t1 6 4.500-1M6 9h5" fill="none" stroke="#e6f3ff" stroke-width="1.500"/></svg>
    <svg viewBox="0 0 18 18"><path d="M3 17V2M4 3q4-2 10 0v7q-6-2-10 0z" fill="#fff" stroke="#fff" stroke-width="1.300"/><circle cx="12" cy="12" r="5" fill="#dd2b27"/><path d="M10 10l4 4M14 10l-4 4" stroke="#fff" stroke-width="1.500"/></svg>
    <svg viewBox="0 0 18 18"><path d="M9 3H3v13h8M6 3V1" fill="none" stroke="#fff" stroke-width="2"/><path d="M8 6h9v3q0 4-4.500 4T8 9zM10 6V2M15 6V2M12.500 12v4" fill="#fff" stroke="#fff" stroke-width="1.500"/></svg>
    <svg viewBox="0 0 18 18"><path d="M2 7h3l4-4v13l-4-4H2z" fill="#fff"/><path d="M11 6q2 3 0 6M13.500 4.500q3 4.500 0 9" fill="none" stroke="#fff" stroke-width="1.300"/></svg>
    <span class="clock" data-w="28">15:48</span>
    <i class="desk"></i>
  </div>
</div>
<script src="app.js"></script>
</body>
</html>
```
FILE: styles.css
```css
* { box-sizing: border-box; }
body { margin: 0; width: 1366px; height: 768px; overflow: hidden; display: flex; flex-direction: column; font-family: "Noto Sans CJK SC", "Noto Sans", sans-serif; color: #3a414a; }
svg { flex: none; display: block; }
.defs { position: absolute; }
[data-w] { white-space: nowrap; display: inline-block; }
i { font-style: normal; }

/* browser chrome */
.tabs, .nav, .bookmarks { font-family: "Noto Sans", sans-serif; flex: none; }
.tabs { height: 33px; display: flex; background: linear-gradient(#458a87 1px, #202340 1px); }
.tab { width: 118.7px; flex: none; display: flex; align-items: center; padding: 2px 0 0 9.500px; color: #f9f9fa; font-size: 12px; border-right: 1px solid #555770; margin-top: 1px; height: 32px; }
.tab.active { background: #f9f9fa; color: #0c0c0d; border-top: 2px solid #0a84ff; border-right: 0; padding-top: 0; }
.tab:nth-child(4) { border-right: 0; }
.tab:nth-child(10) { border-right: 0; }
.fav { width: 16px; height: 16px; margin-right: 6px; }
.pg { background: #326690; color: #fff; border-radius: 2px; font: bold 11px/15px "DejaVu Sans"; letter-spacing: -.8px; text-align: center; }
.lbl { width: 80px; overflow: hidden; line-height: 20px; }
.short { width: 61px; }
.wide { width: 100px; }
.fade { -webkit-mask-image: linear-gradient(90deg, #000 calc(100% - 32px), transparent calc(100% - 1px)); mask-image: linear-gradient(90deg, #000 calc(100% - 32px), transparent calc(100% - 1px)); }
.tabx { width: 10px; height: 10px; margin-left: 3px; }
.glass { flex: 1; height: 33px; display: flex; background: linear-gradient(90deg, #3f8c87, #66c1b9 16%, #72c8ba 45%, #73bfae 60%, #7fc2c0); box-shadow: inset 0 -12px 10px -3px rgba(125,225,230,.6); }
.plus { width: 14px; height: 14px; margin: 9px 0 0 10px; }
.winbtns { margin: -1px 0 0 49px; display: flex; height: 20px; width: 105px; border: 1px solid #d5eeee; outline: 1px solid #376862; border-radius: 0 0 5px 5px; overflow: hidden; background: linear-gradient(#9ccbc4 45%, #5d9993 50%, #8dc4bd); }
.wb { width: 28px; display: flex; align-items: center; justify-content: center; border-right: 1px solid #41746f; }
.close { width: 48px; border: 0; background: linear-gradient(#d99483 45%, #b83a25 50%, #d66a4d); }
.nav { height: 39px; background: #f9f9fa; display: flex; align-items: center; padding: 1px 0 0 3px; }
.back { width: 34px; height: 34px; border: 1px solid #cfcfd1; border-radius: 50%; display: flex; align-items: center; justify-content: center; }
.n-fwd { margin-left: 7px; }
.n-reload { margin-left: 15px; }
.n-home { margin-left: 15px; }
.url { margin-left: 120px; width: 605px; height: 30px; border: 1px solid #bebebf; border-radius: 2px; background: #fff; display: flex; align-items: center; font-size: 13.500px; color: #737374; }
.url b { font-weight: 400; color: #0c0c0d; }
.url span { padding-top: 1px; }
.u-shield { margin-left: 8px; }
.u-div { width: 1px; height: 22px; background: #d7d7db; margin: 0 8px 0 7px; }
.u-text { width: 433px; margin-left: 10px; overflow: hidden; -webkit-mask-image: linear-gradient(90deg, #000 400px, transparent 430px); mask-image: linear-gradient(90deg, #000 400px, transparent 430px); }
.u-dots { margin-left: 32px; }
.u-pocket { margin-left: 12px; }
.u-star { margin-left: 11px; }
.search { margin-left: 10px; width: 220px; height: 30px; border: 1px solid #bebebf; border-radius: 2px; background: #fff; display: flex; align-items: center; padding-left: 7px; gap: 6px; font-size: 13.500px; color: #6d6d70; }
.search span { padding-top: 2px; }
.navr { flex: 1; display: grid; grid-template-columns: 32px 32px 32px 32px 8px 33px; justify-content: end; justify-items: center; align-items: center; padding-right: 3px; }
.n-div { width: 1px; height: 34px; background: #d7d7db; }
.bookmarks { height: 24px; background: #f9f9fa; border-bottom: 1px solid #d3d3d6; display: flex; align-items: center; padding-left: 13px; font-size: 12px; color: #0c0c0d; }
.bm1 { margin-left: 5px; }
.bm-ff { margin: 0 4px 0 12px; }

/* document header */
.head { height: 64px; flex: none; background: #3e4650; display: flex; align-items: center; color: #fff; padding-left: 8px; position: relative; }
.logo { width: 40px; height: 40px; border-radius: 3px; background: #ff8f2b; display: flex; align-items: center; justify-content: center; }
.titles { margin: -4px 0 0 16px; width: 500px; }
.title { font-size: 16.400px; font-weight: 700; line-height: 24px; height: 24px; }
.menu { display: flex; gap: 16px; font-size: 12.800px; line-height: 22px; height: 22px; padding-top: 1px; }
.menu span { -webkit-text-stroke: .35px; }
.menu .new { text-decoration: underline; text-underline-offset: 2px; }
.menu .saved { color: #aab0b6; }
.banner { position: absolute; left: 585px; top: 0; width: 196px; height: 36px; background: #4499ff; border-radius: 0 0 4px 4px; box-shadow: 0 2px 3px rgba(0,0,0,.5); display: flex; align-items: center; padding-left: 26px; font-size: 13.500px; gap: 12px; }
.banner a { text-decoration: underline; text-underline-offset: 2px; padding-bottom: 2px; -webkit-text-stroke: .2px; }
.find { margin-left: 423px; display: flex; align-items: center; gap: 7px; font-size: 12.800px; width: 115px; }
.find span { -webkit-text-stroke: .35px; padding-bottom: 1px; }
.btn { height: 32px; border-radius: 3px; display: flex; align-items: center; gap: 5px; font-size: 12.800px; font-weight: 700; padding-left: 18px; }
.btn span { padding-bottom: 1px; }
.present { width: 110px; background: #79828c; }
.share { width: 98px; margin-left: 8px; background: #ff8f2b; }
.avatar { width: 32px; height: 32px; margin-left: 8px; border-radius: 50%; background: #79828c; font-size: 13px; font-weight: 700; line-height: 31px; text-align: center; }

/* editor */
.mid { height: 546px; flex: none; display: flex; }
.left { width: 216px; flex: none; display: flex; flex-direction: column; border-right: 1px solid #a8a9ac; background: #e5e5e5; }
.left [data-w] { padding-bottom: 2px; }
.lhead { height: 41px; flex: none; background: #efefef; border-bottom: 1px solid #a2a3a6; display: flex; align-items: center; padding-left: 12px; }
.lt { margin: 0 0 0 7px; width: 43px; font-size: 13px; font-weight: 700; }
.pic { margin: 0 13px 0 73px; }
.lbody { height: 459px; overflow: hidden; position: relative; }
.basic { height: 51px; border-bottom: 1px solid #c9cacb; display: flex; align-items: center; padding: 2px 0 0 10px; }
.b2 { margin-left: 12px; } .b3 { margin-left: 9px; } .b4 { margin-left: 10px; } .b5 { margin-left: 9px; } .b6 { margin-left: 9px; }
.sec { height: 135px; border-bottom: 1px solid #c9cacb; }
.sec h3 { margin: 0; height: 50px; padding: 3px 0 0 18px; display: flex; align-items: center; font-size: 13.500px; font-weight: 400; color: #55585c; }
.sec h3 i { border: 4px solid transparent; border-top: 6px solid #7b848d; border-bottom: 0; margin-right: 4px; }
.sec h3 svg { width: 14px; height: 14px; margin-left: auto; margin-right: 20px; }
.shapes { display: grid; grid-template-columns: repeat(5, 38.750px); grid-auto-rows: 36px; padding-left: 10.500px; justify-items: center; align-items: center; }
.shapes svg { width: 26px; height: 26px; }
.last { height: 170px; }
.lscroll { position: absolute; right: 2px; top: 2px; width: 6px; height: 127px; border-radius: 3px; background: #c5c6c8; }
.import { height: 46px; background: #efefef; border: 1px solid #cfcfd0; display: flex; align-items: center; padding-left: 54px; gap: 9px; font-size: 14.800px; color: #55585c; }
.work { flex: 1; display: flex; flex-direction: column; }
.tools { height: 41px; background: #efefef; border-bottom: 1px solid #a2a3a6; display: grid; align-items: center; justify-items: center; padding: 0 11px 0 12px; grid-template-columns: 28px 28px 14px 150px 6px 55px 30px 26px 28px 29px 28px 28px 12px 27px 28px 28px 28px 2px 112px 33px 125px 34px 6px 30px 27px 29px 11px 28px 1fr 40px; }
.sep { width: 1px; height: 40px; background: #cdced0; }
.tb { font-size: 18px; line-height: 20px; padding-bottom: 2px; }
.low { margin-top: 4px; }
.sel { height: 22px; width: 100%; background: #fff; border: 1px solid #a9abae; border-radius: 4px; display: flex; align-items: center; color: #4c4f53; }
.tri { border: 4px solid transparent; border-top: 6px solid #7b848d; border-bottom: 0; }
.vd { width: 1px; height: 20px; background: #a9abae; }
.font { font: 14px "Liberation Sans"; padding: 0 9px 0 3px; justify-content: space-between; }
.size { font-size: 13.500px; padding-left: 12px; gap: 5px; }
.size span, .line span, .ends span { padding-bottom: 1px; }
.line { font-size: 13px; }
.line svg:first-child { margin: 0 7px 0 10px; } .line .vd { margin: 0 6px 0 3px; } .line span { margin-right: 10px; }
.ends { font-size: 13px; padding-left: 3px; }
.ends .tri { margin-left: 9px; } .ends .vd { margin: 0 3px 0 10px; }
.stage { flex: 1; display: flex; }
.minor { stroke: #eeeeee; fill: none; } .major { stroke: #dcdcdc; fill: none; }
.ln { fill: none; stroke: #808285; } .soft { stroke: #9a9a9a; }
.cases { fill: #3179cd; }
.txt { font: italic 10px "Liberation Sans"; fill: #6a6b6d; text-anchor: middle; }
.txt.w { fill: #eef4fc; } .big { font-size: 11.500px; } .up { font-style: normal; }
.dock { width: 41px; background: #e5e5e5; border-left: 1px solid #a2a3a6; display: grid; grid-template-rows: 29px 46px repeat(8, 47.400px); align-items: center; justify-items: center; }
.dock svg { width: 22px; height: 22px; }

/* page tabs and zoom */
.pages { height: 32px; flex: none; background: #79828c; display: flex; align-items: center; padding-left: 103px; font-size: 13px; color: #fff; }
.p-grid { margin: 0 14px 0 18px; }
.ptab { height: 28px; align-self: flex-start; padding: 0 10px; background: #69727b; color: #d0d4d8; border-radius: 0 0 3px 3px; margin-right: 4px; display: flex; align-items: center; width: 60px; }
.ptab span { padding-bottom: 1px; }
.ptab.on { width: 171px; background: #3e4650; color: #fff; -webkit-text-stroke: .2px; }
.pages .tri { border-top: 7px solid #fff; margin-left: 5px; }
.p-add { margin-left: 8px; }
.p-div { width: 1px; height: 23px; background: #3e4650; margin-left: 631px; }
.p-nav { margin-left: 12px; } .p-minus { margin-left: 16px; }
.slider { width: 139px; height: 4px; border-radius: 2px; background: #b6b6b6; margin: 0 12px; display: flex; align-items: center; }
.slider i { width: 12px; height: 12px; border-radius: 50%; background: #4499ff; margin-left: 45px; }
.zoom { margin-left: 7px; -webkit-text-stroke: .3px; }

/* system taskbar */
.taskbar { height: 30px; flex: none; border-top: 1px solid #1e4a4d; box-shadow: inset 0 1px #9dcccb; background: linear-gradient(90deg, #4c8582, #4f8885 4%, #6bb3b2 12%, #70bbb9 30%, #70bbb9 67%, #508a88 71%, #508a88 90%, #528d8b); display: flex; align-items: center; font-family: "Noto Sans", sans-serif; }
.start { margin: -6px 14px 0 8px; position: relative; }
.app { width: 43px; height: 28px; margin-right: 3px; display: flex; align-items: center; justify-content: center; margin-top: 1px; }
.app svg { width: 18px; height: 18px; }
.box { border: 1px solid #326d6d; border-radius: 2px; background: linear-gradient(#9ed0ce, #82c0be); box-shadow: inset 0 0 0 1px #b9dedd; }
.box.lit { background: linear-gradient(#eaf6f6, #c3dedd); }
.box.ij { background: linear-gradient(90deg, #8ec7c4, #b4d9d6); }
.tray { margin-left: auto; display: flex; align-items: center; color: #fff; font-size: 12px; }
.tray svg { width: 18px; height: 18px; margin-right: 6px; }
.lang { margin: -5px 15px 0 0; }
.clock { margin: 0 24px 0 31px; }
.desk { width: 14px; height: 29px; background: linear-gradient(135deg, #a2c8c6, #427b79); border: 1px solid #2f6563; box-shadow: inset 0 0 0 1px #94bebc; }
```
FILE: app.js
```js
// Draws the page grid: 12.8px cells with a heavier line every fourth cell.
function drawGrid() {
  let minor = '', major = '';
  for (let k = 0; k < 82; k++) {
    const x = Math.round(277 + k * 12.8) + 0.5;
    if (k && x < 1325) {
      const d = `M${x} 201V706`;
      if (k % 4) minor += d; else major += d;
    }
  }
  for (let k = 0; k < 40; k++) {
    const y = Math.round(210 + k * 12.8) + 0.5;
    if (y < 706) {
      const d = `M277 ${y}H1325`;
      if (k % 4) minor += d; else major += d;
    }
  }
  document.getElementById('minor').setAttribute('d', minor);
  document.getElementById('major').setAttribute('d', major);
}

function fitLabels() {
  document.querySelectorAll('[data-w]').forEach(el => {
    const want = Number(el.dataset.w);
    const n = el.textContent.length;
    const range = document.createRange();
    range.selectNodeContents(el);
    const text = range.getBoundingClientRect().width;
    el.style.letterSpacing = ((want - text) / n).toFixed(3) + 'px';
    el.style.width = want + 'px';
  });
}

drawGrid();
fitLabels();
```
